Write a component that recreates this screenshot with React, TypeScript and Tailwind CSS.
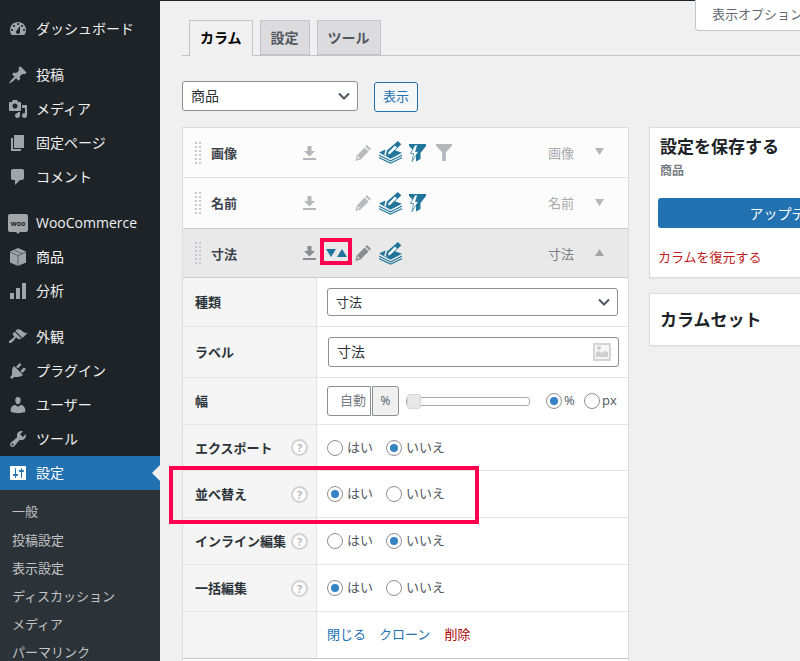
const D: Record<string, string> = {
  dashboard: "M3.76 16h12.48c1.1-1.37 1.76-3.11 1.76-5 0-4.42-3.58-8-8-8s-8 3.58-8 8c0 1.89.66 3.63 1.76 5zM10 4c.55 0 1 .45 1 1s-.45 1-1 1-1-.45-1-1 .45-1 1-1zM6 6c.55 0 1 .45 1 1s-.45 1-1 1-1-.45-1-1 .45-1 1-1zm8 0c.55 0 1 .45 1 1s-.45 1-1 1-1-.45-1-1 .45-1 1-1zm-5.37 5.55L12 7v6c0 1.1-.9 2-2 2s-2-.9-2-2c0-.57.24-1.08.63-1.45zM4 10c.55 0 1 .45 1 1s-.45 1-1 1-1-.45-1-1 .45-1 1-1zm12 0c.55 0 1 .45 1 1s-.45 1-1 1-1-.45-1-1 .45-1 1-1z",
  post: "M10.44 3.02l1.82-1.82 6.36 6.35-1.83 1.82c-1.05-.68-2.48-.57-3.41.36l-.75.75c-.92.93-1.04 2.35-.35 3.41l-1.83 1.82-2.41-2.41-2.8 2.79c-.42.42-3.38 2.71-3.8 2.29s1.86-3.39 2.28-3.81l2.79-2.79L4.1 9.36l1.83-1.82c1.05.69 2.48.57 3.4-.36l.75-.75c.93-.92 1.05-2.35.36-3.41z",
  media: "M13 11V4c0-.55-.45-1-1-1h-1.67L9 1H5L3.67 3H2c-.55 0-1 .45-1 1v7c0 .55.45 1 1 1h10c.55 0 1-.45 1-1zM7 4.5c1.38 0 2.5 1.12 2.5 2.5S8.38 9.5 7 9.5 4.5 8.38 4.5 7 5.62 4.5 7 4.5zM14 6h5v10.5c0 1.38-1.12 2.5-2.5 2.5S14 17.88 14 16.5s1.12-2.5 2.5-2.5c.17 0 .34.02.5.05V9h-3V6zm-4 8.05V13h2v3.5c0 1.38-1.12 2.5-2.5 2.5S7 17.88 7 16.5 8.12 14 9.5 14c.17 0 .34.02.5.05z",
  page: "M6 15V2h10v13H6zm-1 1h8v2H3V5h2v11z",
  comment: "M5 2h9c1.1 0 2 .9 2 2v7c0 1.1-.9 2-2 2h-2l-5 5v-5H5c-1.1 0-2-.9-2-2V4c0-1.1.9-2 2-2z",
  chart: "M18 18V2h-4v16h4zm-6 0V7H8v11h4zm-6 0v-6H2v6h4z",
  appearance: "M14.48 11.06L7.41 3.99l1.5-1.5c.5-.56 2.3-.47 3.51.32 1.21.8 1.43 1.28 2.91 2.1 1.18.64 2.45 1.26 4.45.85zm-.71.71L6.7 4.7 4.93 6.47c-.39.39-.39 1.02 0 1.41l1.06 1.06c.39.39.39 1.03 0 1.42-.6.6-1.43 1.11-2.21 1.69-.35.26-.7.53-1.01.84C1.43 13.23.4 14.96 1.2 15.8c.85.84 2.57-.18 3.91-1.52.32-.32.59-.67.85-1.02.58-.78 1.09-1.61 1.69-2.21.39-.39 1.02-.39 1.41 0l1.06 1.06c.39.39 1.02.39 1.41 0z",
  plugin: "M13.11 4.36L9.87 7.6 8 5.73l3.24-3.24c.35-.34 1.05-.2 1.56.32.52.51.66 1.21.31 1.55zm-8 1.77l.91-1.12 9.01 9.01-1.19.84c-.71.71-2.63 1.16-3.82 1.16H6.14L4.9 17.26c-.59.59-1.54.59-2.12 0-.59-.58-.59-1.53 0-2.12l1.24-1.24v-3.88c0-1.13.4-3.19 1.09-3.89zm7.26 3.97l3.24-3.24c.34-.35 1.04-.21 1.55.31.52.51.66 1.21.31 1.55l-3.24 3.25z",
  users: "M10 9.25c-2.27 0-2.73-3.44-2.73-3.44C7 4.02 7.82 2 9.97 2c2.16 0 2.98 2.02 2.71 3.81 0 0-.41 3.44-2.68 3.44zm0 2.57L12.72 10c2.39 0 4.52 2.33 4.52 4.53v2.49s-3.65 1.13-7.24 1.13c-3.65 0-7.24-1.13-7.24-1.13v-2.49c0-2.25 1.94-4.48 4.47-4.48z",
  tools: "M16.68 9.77c-1.34 1.34-3.3 1.67-4.95.99l-5.41 6.52c-.99.99-2.59.99-3.58 0s-.99-2.59 0-3.57l6.52-5.42c-.68-1.65-.35-3.61.99-4.95 1.28-1.28 3.12-1.62 4.72-1.06l-2.89 2.89 2.82 2.82 2.86-2.87c.53 1.58.18 3.39-1.08 4.65zM3.81 16.21c.4.39 1.04.39 1.43 0 .4-.4.4-1.04 0-1.43-.39-.4-1.03-.4-1.43 0-.39.39-.39 1.03 0 1.43z",
  settings: "M18 16V4c0-.55-.45-1-1-1H3c-.55 0-1 .45-1 1v12c0 .55.45 1 1 1h14c.55 0 1-.45 1-1zM8 11h1c.55 0 1 .45 1 1s-.45 1-1 1H8v1.5c0 .28-.22.5-.5.5s-.5-.22-.5-.5V13H6c-.55 0-1-.45-1-1s.45-1 1-1h1V5.5c0-.28.22-.5.5-.5s.5.22.5.5V11zm5-2h-1c-.55 0-1-.45-1-1s.45-1 1-1h1V5.5c0-.28.22-.5.5-.5s.5.22.5.5V7h1c.55 0 1 .45 1 1s-.45 1-1 1h-1v5.5c0 .28-.22.5-.5.5s-.5-.22-.5-.5V9z",
};

function MenuIcon({ name, color = "#a0a5aa" }: { name: string; color?: string }) {
  if (name === "box") {
    return (
      <svg viewBox="0 0 20 20" className="w-5 h-5 shrink-0">
        <path d="M10 1l8 3.6v10.8L10 19l-8-3.6V4.6z" fill={color} />
        <path d="M2 5l8 3.6L18 5M10 8.6V19M6 3l8 3.6" fill="none" stroke="#1d2327" strokeWidth="0.5" />
      </svg>
    );
  }
  return (
    <svg viewBox="0 0 20 20" className="w-5 h-5 shrink-0" fill={color} fillRule="evenodd">
      <path d={D[name]} />
    </svg>
  );
}

function MenuRow({ icon, label }: { icon: string; label: string }) {
  return (
    <div className="h-[34px] flex items-center pl-2 text-[14px] text-[#f0f0f1]">
      <MenuIcon name={icon} />
      <span className="ml-2 mb-[2px]">{label}</span>
    </div>
  );
}

function WooRow() {
  return (
    <div className="h-[34px] flex items-center pl-2 text-[14px] text-[#f0f0f1]">
      <span className="relative w-5 h-[18px] rounded-[2px] bg-[#a0a5aa] flex items-center justify-center text-[7px] font-bold text-[#1d2327] leading-none">
        woo
        <span className="absolute left-[8px] -bottom-[2px] w-0 h-0 border-x-[2px] border-x-transparent border-t-[2px] border-t-[#a0a5aa]" />
      </span>
      <span className="ml-2 mb-[2px]">WooCommerce</span>
    </div>
  );
}

function Download({ color = "#b4b6b9" }: { color?: string }) {
  return (
    <svg viewBox="0 0 13 14" className="w-[13px] h-[14px] shrink-0" fill={color}>
      <path d="M4.5 0h4v5H12L6.5 10.5 1 5h3.5zM0 12h13v2H0z" />
    </svg>
  );
}

function Pencil({ color = "#b9bbbe" }: { color?: string }) {
  return (
    <svg viewBox="0 0 16 16" className="w-4 h-4 shrink-0" fill={color}>
      <path d="M12 0l4 4-1.6 1.6-4-4zM9.6 2.4l4 4-8 8.2L0.4 16l1.2-5.2zM2.9 11.3l-.8 2.6 2.6-.8z" fillRule="evenodd" />
    </svg>
  );
}

function Bulk() {
  return (
    <svg viewBox="0 0 23 23" className="w-[23px] h-[23px] shrink-0" fill="#21759b">
      <path d="M0 11.5L6.5 8.5 5 15l6-1.5L15 9l8 2.8-11.5 6z" />
      <path d="M0 13.5l11.5 5.7L23 13.5v1.2L11.5 20.4 0 14.7zM0 16l11.5 5.5L23 16v1.2L11.5 22.7 0 17.2z" />
      <path d="M15.5 3L18.8 0l3.5 3.3-10.3 10-5.3 1.4 1.2-5.2z" />
      <path d="M16 4.5l2 2-6.8 6.2-2.2.6.6-2.2z" fill="#fff" />
    </svg>
  );
}

function FilterBolt() {
  return (
    <svg viewBox="0 0 17 18" className="w-[17px] h-[18px] shrink-0">
      <path d="M0 0h17v2l-5.5 7v6L7 17.5V9L0 2z" fill="#21759b" />
      <path d="M6 1L1.5 9.5h3L3 17.5 9.5 7.5H6.5L8.5 1z" fill="#fff" stroke="#21759b" strokeWidth="0.7" />
    </svg>
  );
}

function Filter() {
  return (
    <svg viewBox="0 0 16 17" className="w-4 h-[17px] shrink-0" fill="#b4b6b9">
      <path d="M0 0h16v1.5L9.8 8.5V17H6.2V8.5L0 1.5z" />
    </svg>
  );
}

function Handle() {
  return (
    <div className="grid grid-cols-2 gap-x-[2px] gap-y-[2px] w-[6px] shrink-0">
      {Array.from({ length: 12 }).map((_, i) => (
        <span key={i} className="w-[2px] h-[2px] bg-[#c4c7cb]" />
      ))}
    </div>
  );
}

function Radio({ on }: { on?: boolean }) {
  return (
    <span className="w-4 h-4 rounded-full border border-[#8c8f94] bg-white flex items-center justify-center shrink-0">
      {on && <span className="w-2 h-2 rounded-full bg-[#3582c4]" />}
    </span>
  );
}

function Help() {
  return (
    <span className="w-[17px] h-[17px] rounded-full border-2 border-[#d2d3d5] bg-white text-[#b4b6b9] text-[11px] font-bold flex items-center justify-center leading-none shrink-0">
      ?
    </span>
  );
}

function Chevron() {
  return (
    <svg viewBox="0 0 12 8" className="w-3 h-2 shrink-0" fill="none" stroke="#50575e" strokeWidth="2">
      <path d="M1 1.5l5 5 5-5" />
    </svg>
  );
}

function ColumnRow({ name, kind, open, bolt, filter, noDivider }: { name: string; kind: string; open?: boolean; bolt?: boolean; filter?: boolean; noDivider?: boolean }) {
  const bar = open ? "h-[50px] bg-[#e9e9e9] border-y border-[#c8cacc]" : noDivider ? "h-[50px] bg-[#fcfcfc]" : "h-[50px] bg-[#fcfcfc] border-b border-[#e1e1e1]";
  return (
    <div className={`${bar} flex items-center pl-3`}>
      <Handle />
      <span className={`ml-[10px] w-[92px] text-[13px] font-bold text-[#3c434a] ${noDivider ? "mt-[1px]" : "mt-[3px]"}`}>{name}</span>
      <Download color={open ? "#8a8c8f" : "#b4b6b9"} />
      <span className="w-[39px] shrink-0 flex justify-end">
        {open && (
          <svg viewBox="0 0 21 9" className="w-[21px] h-[9px] mr-[8px] shrink-0" fill="#21759b">
            <path d="M0 0h10L5 8zM11 8l5-8 5 8z" />
          </svg>
        )}
      </span>
      <Pencil color={open ? "#8a8c8f" : "#b9bbbe"} />
      <span className="ml-2"><Bulk /></span>
      {bolt && <span className="ml-[7px]"><FilterBolt /></span>}
      {filter && <span className="ml-[10px]"><Filter /></span>}
      <span className={`ml-auto text-[13px] ${noDivider ? "mt-[1px]" : "mt-[3px]"} ${open ? "text-[#787c82]" : "text-[#a7aaad]"}`}>{kind}</span>
      <svg viewBox="0 0 9 7" className="w-[9px] h-[7px] ml-[21px] mr-6 mb-[2px]" fill={open ? "#a0a5aa" : "#b4b6b9"}>
        <path d={open ? "M0 7l4.5-7L9 7z" : "M0 0l4.5 7L9 0z"} />
      </svg>
    </div>
  );
}

function YesNo({ yes }: { yes?: boolean }) {
  return (
    <div className="flex items-center text-[13px] text-[#50575e]">
      <Radio on={yes} />
      <span className="ml-1 w-[39px]">はい</span>
      <Radio on={!yes} />
      <span className="ml-1">いいえ</span>
    </div>
  );
}

function DetailRow({ h, label, help, children }: { h: string; label?: string; help?: boolean; children: React.ReactNode }) {
  return (
    <div className={`${h} flex border-b border-[#e5e5e5]`}>
      <div className="w-[134px] shrink-0 bg-[#f5f5f5] border-r border-[#e1e1e1] pl-3 flex items-center text-[13px] text-[#2c3338] font-bold">
        <span className="flex-1 whitespace-nowrap mt-[2px]">{label}</span>
        {help && <span className="mr-2"><Help /></span>}
      </div>
      <div className="flex-1 pl-[10px] flex items-center bg-white">{children}</div>
    </div>
  );
}

export default function App() {
  return (
    <div className="relative w-[800px] h-[661px] overflow-hidden bg-[#f0f0f1] flex flex-col [font-family:'Open_Sans','Noto_Sans_CJK_JP',sans-serif]">
      <div className="h-px bg-[#1d2327] shrink-0" />
      <div className="flex flex-1 min-h-0">
        <aside className="relative w-[160px] shrink-0 bg-[#1d2327] pt-[11px]">
          <MenuRow icon="dashboard" label="ダッシュボード" />
          <div className="h-3" />
          <MenuRow icon="post" label="投稿" />
          <MenuRow icon="media" label="メディア" />
          <MenuRow icon="page" label="固定ページ" />
          <MenuRow icon="comment" label="コメント" />
          <div className="h-3" />
          <WooRow />
          <MenuRow icon="box" label="商品" />
          <MenuRow icon="chart" label="分析" />
          <div className="h-3" />
          <MenuRow icon="appearance" label="外観" />
          <MenuRow icon="plugin" label="プラグイン" />
          <MenuRow icon="users" label="ユーザー" />
          <MenuRow icon="tools" label="ツール" />
          <div className="relative h-[34px] flex items-center pl-2 bg-[#2271b1] text-[14px] text-white">
            <MenuIcon name="settings" color="#ffffff" />
            <span className="ml-2 mb-[2px]">設定</span>
            <span className="absolute right-0 top-[9px] w-0 h-0 border-y-[8px] border-y-transparent border-r-[8px] border-r-[#f0f0f1]" />
          </div>
          <div className="bg-[#2c3338] pt-2 h-[200px] text-[13px] text-[#c3c4c7]">
            {["一般", "投稿設定", "表示設定", "ディスカッション", "メディア", "パーマリンク"].map((s) => (
              <div key={s} className="h-[28.2px] flex items-center pl-3">{s}</div>
            ))}
          </div>
        </aside>

        <main className="flex-1 min-w-0 pl-[22px]">
          <div className="h-[55px] pt-[19px] pl-[7px] flex items-stretch gap-[7px] border-b border-[#c3c4c7] text-[14px] font-bold">
            <div className="px-[10px] pb-[2px] flex items-center bg-[#f0f0f1] border border-[#c3c4c7] border-b-0 text-black h-[36px] relative z-10">カラム</div>
            <div className="px-[10px] flex items-center bg-[#dcdcde] border border-[#c3c4c7] text-[#50575e]">設定</div>
            <div className="px-[10px] flex items-center bg-[#dcdcde] border border-[#c3c4c7] text-[#50575e]">ツール</div>
          </div>

          <div className="mt-[25px] flex items-start">
            <div className="w-[176px] h-[30px] rounded-[3px] border border-[#8c8f94] bg-white flex items-center justify-between pl-2 pr-[7px] text-[14px] text-[#2c3338]">
              <span className="mb-[2px]">商品</span>
              <Chevron />
            </div>
            <div className="ml-4 mt-px w-[44px] h-[30px] rounded-[3px] border border-[#2271b1] bg-[#f6f7f7] text-[#2271b1] text-[13px] flex items-center justify-center">表示</div>
          </div>

          <div className="mt-[15px] flex items-start">
            <section className="w-[447px] shrink-0 bg-white border border-[#dcdcde] border-b-0 h-[600px]">
              <ColumnRow name="画像" kind="画像" bolt filter />
              <ColumnRow name="名前" kind="名前" bolt noDivider />
              <ColumnRow name="寸法" kind="寸法" open />
              <DetailRow h="h-[49px]" label="種類">
                <div className="w-[291px] h-[28px] rounded-[3px] border border-[#8c8f94] bg-white flex items-center justify-between pl-2 pr-[7px] text-[13px] text-[#2c3338]">
                  <span className="mt-[2px]">寸法</span>
                  <Chevron />
                </div>
              </DetailRow>
              <DetailRow h="h-[51px]" label="ラベル">
                <div className="ml-px w-[291px] h-[30px] rounded-[3px] border border-[#8c8f94] bg-white flex items-center justify-between pl-2 pr-[7px] text-[14px] text-[#2c3338]">
                  <span className="mb-[2px]">寸法</span>
                  <svg viewBox="0 0 18 18" className="w-[18px] h-[18px]">
                    <path d="M0 0h18v18H0z" fill="#d4d4d4" />
                    <path d="M2 2h14v14H2z" fill="#f5f5f5" />
                    <path d="M3 14V9l3-1 3 2 3-2 3 1v5z" fill="#cfcfcf" />
                    <circle cx="6" cy="5" r="2" fill="#cfcfcf" />
                  </svg>
                </div>
              </DetailRow>
              <DetailRow h="h-[47px]" label="幅">
                <div className="flex items-center text-[13px] text-[#50575e]">
                  <div className="w-[44px] h-[30px] rounded-l-[3px] border border-[#8c8f94] flex items-center justify-end pr-[4px] text-[#787c82]">自動</div>
                  <div className="ml-px w-[27px] h-[30px] rounded-r-[3px] border border-[#8c8f94] bg-[#f0f0f1] flex items-center justify-center text-[12px]">%</div>
                  <div className="relative ml-[7px] w-[124px] h-[9px] rounded-[3px] border border-[#a7aaad] bg-white">
                    <span className="absolute left-0 top-[-4px] w-[14px] h-[15px] rounded-[3px] border border-[#d5d5d5] bg-[#e8e8e8]" />
                  </div>
                  <span className="ml-4"><Radio on /></span>
                  <span className="ml-[2px] w-[20px]">%</span>
                  <Radio />
                  <span className="ml-[2px]">px</span>
                </div>
              </DetailRow>
              <DetailRow h="h-[46px]" label="エクスポート" help><YesNo /></DetailRow>
              <DetailRow h="h-[47px]" label="並べ替え" help><YesNo yes /></DetailRow>
              <DetailRow h="h-[47px]" label="インライン編集" help><YesNo /></DetailRow>
              <DetailRow h="h-[47px]" label="一括編集" help><YesNo yes /></DetailRow>
              <div className="h-[47px] flex border-b border-[#c3c4c7]">
                <div className="w-[134px] shrink-0 bg-[#f5f5f5] border-r border-[#e1e1e1]" />
                <div className="flex-1 pl-[10px] flex items-center text-[13px] text-[#2271b1]">
                  <span>閉じる</span>
                  <span className="ml-[13px]">クローン</span>
                  <span className="ml-[14px] text-[#a00]">削除</span>
                </div>
              </div>
            </section>

            <div className="ml-5 shrink-0 w-[290px]">
              <section className="h-[151px] bg-white border border-[#dcdcde] pt-2 pl-2 pr-[10px] shadow-[0_1px_1px_rgba(0,0,0,0.04)]">
                <div className="pl-[2px] text-[17px] font-bold text-[#1d2327] leading-[22px]">設定を保存する</div>
                <div className="pl-[2px] mt-[4px] text-[12px] font-bold text-[#787c82] leading-[18px]">商品</div>
                <div className="mt-[18px] h-[30px] rounded-[3px] bg-[#2271b1] text-white text-[14px] flex items-center justify-center"><span className="mr-[3px]">アップデート</span></div>
                <div className="mt-[18px] text-[13px] text-[#c01c22] leading-[22px]">カラムを復元する</div>
              </section>
              <section className="mt-[15px] h-[53px] bg-white border border-[#dcdcde] pl-[10px] flex items-center text-[17px] font-bold text-[#1d2327] shadow-[0_1px_1px_rgba(0,0,0,0.04)]">
                カラムセット
              </section>
            </div>
          </div>
        </main>
      </div>

      <div className="absolute left-[695px] top-0 w-[150px] h-[31px] bg-white border border-t-0 border-[#c3c4c7] rounded-bl-[4px] pl-4 flex items-center text-[13px] text-[#646970] whitespace-nowrap">
        表示オプション ▼
      </div>
      <div className="absolute left-[320px] top-[238px] w-[32px] h-[27px] border-[4px] border-[#ff0050]" />
      <div className="absolute left-[169px] top-[466px] w-[310px] h-[58px] border-[4px] border-[#ff0050]" />
    </div>
  );
}
